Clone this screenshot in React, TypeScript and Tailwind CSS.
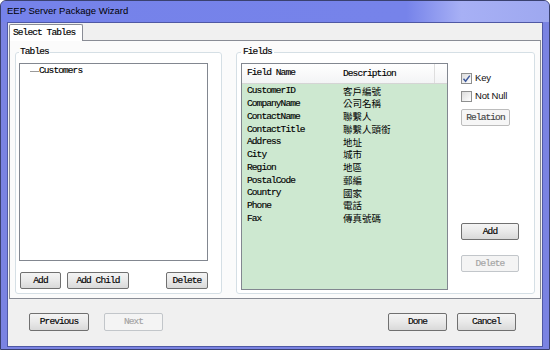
import clsx from "clsx";

const mono = "font-['Liberation_Mono',monospace] text-[9.5px] tracking-[-0.9px] [-webkit-text-stroke:0.15px_currentColor]";

const fields: [string, string][] = [
  ["CustomerID", "客戶編號"],
  ["CompanyName", "公司名稱"],
  ["ContactName", "聯繫人"],
  ["ContactTitle", "聯繫人頭銜"],
  ["Address", "地址"],
  ["City", "城市"],
  ["Region", "地區"],
  ["PostalCode", "郵編"],
  ["Country", "國家"],
  ["Phone", "電話"],
  ["Fax", "傳真號碼"],
];

function Btn({ label, cls, disabled, flat }: { label: string; cls: string; disabled?: boolean; flat?: boolean }) {
  return (
    <button
      className={clsx(
        mono,
        cls,
        "block shrink-0 rounded-[2px] border leading-none",
        disabled
          ? "border-[#c2c6ca] bg-[#f4f4f4] text-[#a3a3a3]"
          : flat
          ? "border-[#bcbcbc] bg-[#f6f6f6] text-[#444]"
          : "border-[#707070] bg-gradient-to-b from-[#f4f4f4] via-[#e9e9e9] to-[#d9d9d9] text-black"
      )}
    >
      {label}
    </button>
  );
}

function Check({ label, checked, cls }: { label: string; checked?: boolean; cls?: string }) {
  return (
    <div className={clsx("flex h-[11px] items-center gap-[3px] whitespace-nowrap", cls)}>
      <div className="flex h-[11px] w-[11px] shrink-0 items-center justify-center border border-[#8e8f8f] bg-gradient-to-br from-[#dcdcdc] to-white">
        {checked && (
          <svg width="9" height="9" viewBox="0 0 9 9">
            <path d="M1.5 4.8 L3.6 7.2 L7.8 1.6" fill="none" stroke="#3f5a9c" strokeWidth="1.5" />
          </svg>
        )}
      </div>
      <span className="font-['Liberation_Sans',Arial,sans-serif] text-[9.5px] tracking-[-0.2px] text-[#111]">{label}</span>
    </div>
  );
}

export default function App() {
  return (
    <div className="flex h-[350px] w-[550px] flex-col overflow-hidden rounded-t-[6px] border border-[#3a4170] bg-[#7a83e2]">
      {/* title bar */}
      <div className="flex h-[21px] shrink-0 items-center bg-[linear-gradient(90deg,#7582ea_0%,#7683ea_74%,#a7b0f5_84%,#9ea8f0_100%)] pl-[6px]">
        <span className="font-['Liberation_Sans',Arial,sans-serif] text-[9.5px] text-black">EEP Server Package Wizard</span>
      </div>

      <div className="mx-[6px] mb-[2px] flex flex-1 flex-col border border-[#4f58a4] bg-[#f0f0f0] px-px pt-px">
        {/* tab */}
        <div className="flex">
          <div className={clsx(mono, "relative z-10 -mb-px flex h-[17px] w-[74px] items-center rounded-t-[2px] border border-b-0 border-[#898c95] bg-white pl-[3px] text-black")}>
            Select Tables
          </div>
        </div>

        {/* tab panel */}
        <div className="flex h-[259px] gap-[14px] border border-[#898c95] bg-[#fbfbfb] pl-[5px] pt-[5px]">
          {/* Tables */}
          <fieldset className="flex h-[248px] w-[207px] flex-col rounded-[3px] border border-[#d5dfe5] bg-white pl-[3px] pt-[5px]">
            <legend className={clsx(mono, "px-px leading-[12px] text-black")}>Tables</legend>
            <div className="h-[198px] w-[189px] border border-[#828790] bg-white">
              <div className="flex h-[13px] items-center pl-[10px] pt-px">
                <div className="h-px w-[9px] bg-[#9a9a9a]" />
                <span className={clsx(mono, "text-black")}>Customers</span>
              </div>
            </div>
            <div className="mt-[11px] flex w-[189px] pl-px">
              <Btn label="Add" cls="h-[17px] w-[41px]" />
              <Btn label="Add Child" cls="ml-[6px] h-[17px] w-[62px]" />
              <Btn label="Delete" cls="ml-auto h-[17px] w-[42px]" />
            </div>
          </fieldset>

          {/* Fields */}
          <fieldset className="flex h-[248px] w-[299px] rounded-[3px] border border-[#d5dfe5] bg-white pl-[4px] pt-[5px]">
            <legend className={clsx(mono, "px-[2px] leading-[12px] text-black")}>Fields</legend>
            <div className="flex h-[227px] w-[207px] shrink-0 flex-col border border-[#828790] bg-[#cde8d0]">
              <div className="flex h-[20px] shrink-0 items-center border-b border-[#d5d5d5] bg-gradient-to-b from-white to-[#f3f4f5]">
                <div className={clsx(mono, "w-[96px] pl-[5px] text-black")}>Field Name</div>
                <div className={clsx(mono, "h-full w-[97px] border-r border-[#dedede] pl-[5px] leading-[20px] text-black")}>Description</div>
              </div>
              <div className="pt-px">
                {fields.map(([name, desc]) => (
                  <div key={name} className="flex h-[12.75px] items-center">
                    <div className={clsx(mono, "w-[96px] pl-[5px] text-black")}>{name}</div>
                    <div className="pl-[5px] font-['Noto_Sans_CJK_TC',sans-serif] text-[9.5px] leading-none text-black">{desc}</div>
                  </div>
                ))}
              </div>
            </div>

            <div className="ml-[13px] flex w-[72px] shrink-0 flex-col pt-[10px]">
              <Check label="Key" checked />
              <Check label="Not Null" cls="mt-[7px]" />
              <Btn label="Relation" cls="mt-[7px] h-[17px] w-[49px]" flat />
              <Btn label="Add" cls="mt-[97px] h-[17px] w-[58px]" />
              <Btn label="Delete" cls="mt-[15px] h-[17px] w-[58px]" disabled />
            </div>
          </fieldset>
        </div>

        {/* bottom buttons */}
        <div className="flex items-start pl-[20px] pr-[25px] pt-[14px]">
          <Btn label="Previous" cls="h-[18px] w-[60px]" />
          <Btn label="Next" cls="ml-[15px] h-[18px] w-[59px]" disabled />
          <Btn label="Done" cls="ml-auto h-[18px] w-[59px]" />
          <Btn label="Cancel" cls="ml-[10px] h-[18px] w-[59px]" />
        </div>
      </div>
    </div>
  );
}
